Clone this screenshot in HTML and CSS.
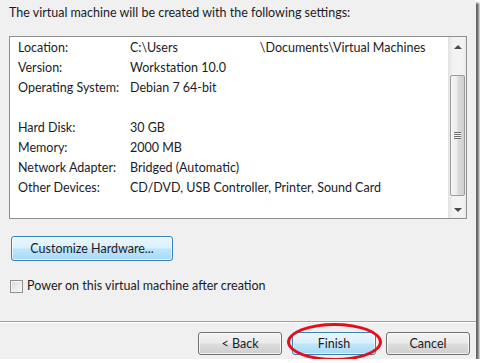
FILE: index.html
```html
<!DOCTYPE html>
<html lang="en">
<head>
  <meta charset="UTF-8" />
  <title>New Virtual Machine Wizard - Ready to Create</title>
  <link rel="stylesheet" href="styles.css">
</head>
<body>

  <div class="dialog">
    <p class="intro">The virtual machine will be created with the following settings:</p>

    <div class="summary">
      <div class="summary-list">
        <div class="row"><span class="key">Location:</span><span class="val">C:\Users<span class="redact"></span>\Documents\Virtual Machines</span></div>
        <div class="row"><span class="key">Version:</span><span class="val">Workstation 10.0</span></div>
        <div class="row"><span class="key">Operating System:</span><span class="val">Debian 7 64-bit</span></div>
        <div class="row"></div>
        <div class="row"><span class="key">Hard Disk:</span><span class="val">30 GB</span></div>
        <div class="row"><span class="key">Memory:</span><span class="val">2000 MB</span></div>
        <div class="row"><span class="key">Network Adapter:</span><span class="val">Bridged (Automatic)</span></div>
        <div class="row"><span class="key">Other Devices:</span><span class="val">CD/DVD, USB Controller, Printer, Sound Card</span></div>
      </div>

      <!-- fake win7 scrollbar -->
      <div class="scrollbar">
        <div class="arrow"><span class="tri up"></span></div>
        <div class="track">
          <div class="thumb"><span class="grip"></span></div>
        </div>
        <div class="arrow"><span class="tri down"></span></div>
      </div>
    </div>

    <button class="btn hot customize">Customize Hardware...</button>

    <label class="power">
      <span class="check"></span>
      Power on this virtual machine after creation
    </label>

    <div class="footer">
      <button class="btn">&lt; Back</button>
      <button class="btn hot finish">Finish<span class="ring"></span></button>
      <button class="btn">Cancel</button>
    </div>
  </div>

</body>
</html>
```

FILE: styles.css
```css
:root {
  --face: #f0f0f0;
  --text: #1b1b26;
  --list-border: #8e8f8f;
}

body {
  margin: 0;
  padding: 0;
  background-color: #ffffff;
  font-family: Lato, "Open Sans", sans-serif;
  font-size: 12.5px;
  color: var(--text);
}

.dialog {
  width: 476px;
  height: 359px;
  background-color: var(--face);
  box-shadow: 3px 3px 2px rgba(0, 0, 0, 0.6);
  display: flex;
  flex-direction: column;
}

.intro {
  margin: 5px 0 0 9px;
  line-height: 16px;
}

.summary {
  margin: 15px 9px 0 9px;
  height: 183px;
  box-sizing: border-box;
  border: 1px solid var(--list-border);
  background-color: #ffffff;
  display: flex;
}

.summary-list {
  flex: 1;
  padding: 1px 0 0 8px;
}

.row {
  height: 20px;
  line-height: 20px;
  display: flex;
}

.key {
  width: 112px;
}

.redact {
  display: inline-block;
  width: 82px;
}

.scrollbar {
  width: 17px;
  display: flex;
  flex-direction: column;
  border-left: 1px solid #e2e2e2;
  background: linear-gradient(to right, #e6e6e6, #f3f3f3 25%, #f3f3f3 75%, #ebebeb);
}

.arrow {
  height: 17px;
  display: flex;
  align-items: center;
  justify-content: center;
}

.tri {
  width: 0;
  height: 0;
  border-left: 4px solid transparent;
  border-right: 4px solid transparent;
}

.tri.up {
  border-bottom: 4px solid #4a4a4a;
  margin-top: 3px;
}

.tri.down {
  border-top: 4px solid #4a4a4a;
}

.track {
  flex: 1;
  padding: 21px 1px 5px 1px;
  display: flex;
}

.thumb {
  flex: 1;
  border: 1px solid #9b9b9b;
  border-radius: 2px;
  background: linear-gradient(to right, #f6f6f6, #ececec 45%, #dadada 55%, #d0d0d0);
  display: flex;
  align-items: center;
  justify-content: center;
}

.grip {
  width: 7px;
  height: 7px;
  background: repeating-linear-gradient(to bottom, #6f6f6f 0 1px, #f4f4f4 1px 2px);
}

.btn {
  font-family: inherit;
  font-size: 12.5px;
  color: var(--text);
  height: 23px;
  padding: 0;
  border: 1px solid #707070;
  border-radius: 3px;
  background: linear-gradient(to bottom, #f2f2f2, #ebebeb 49%, #dddddd 51%, #cfcfcf);
  box-shadow: inset 0 0 0 1px rgba(255, 255, 255, 0.7);
}

.btn.hot {
  border-color: #3c7fb1;
  background: linear-gradient(to bottom, #eaf6fd, #d9f0fc 49%, #bee6fd 51%, #a7d9f5);
}

.customize {
  align-self: flex-start;
  margin: 17px 0 0 11px;
  width: 162px;
  height: 25px;
}

.power {
  display: flex;
  align-items: center;
  gap: 4px;
  margin: 17px 0 0 10px;
  line-height: 16px;
}

.check {
  width: 11px;
  height: 11px;
  border: 1px solid #8f8f8f;
  background: linear-gradient(135deg, #dcdcdc, #f7f7f7);
  box-shadow: inset 0 0 0 1px #f4f4f4;
}

.footer {
  margin-top: auto;
  border-top: 1px solid #a0a0a0;
  box-shadow: inset 0 1px 0 #ffffff;
  height: 38px;
  display: flex;
  justify-content: flex-end;
  align-items: flex-start;
  gap: 10px;
  padding: 10px 6px 0 0;
  box-sizing: border-box;
}

.footer .btn {
  width: 84px;
}

.finish {
  position: relative;
}

.ring {
  position: absolute;
  left: -6px;
  right: -7px;
  top: -10px;
  bottom: -7px;
  border: 3px solid #e3101c;
  border-radius: 50%;
}
```
